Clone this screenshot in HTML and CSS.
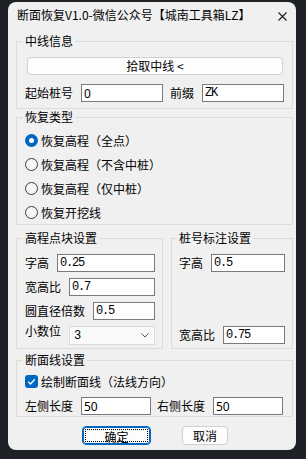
FILE: index.html
```html
<!DOCTYPE html>
<html lang="zh-CN">
<head>
<meta charset="UTF-8">
<meta name="viewport" content="width=device-width, initial-scale=1.0">
<title>断面恢复</title>
<link rel="stylesheet" href="styles.css">
</head>
<body>

<div class="window">
    <div class="titlebar">
        <span class="title">断面恢复V1.0-微信公众号【城南工具箱LZ】</span>
        <svg class="close" width="9" height="9" viewBox="0 0 9 9">
            <path d="M0.5 0.5 L8.5 8.5 M8.5 0.5 L0.5 8.5" stroke="#1a1a1a" stroke-width="1.1" fill="none"/>
        </svg>
    </div>

    <div class="content">
        <fieldset class="group group-line">
            <legend>中线信息</legend>
            <button class="btn pick">拾取中线 &lt;</button>
            <div class="row">
                <span class="label w56">起始桩号</span>
                <input class="field sans w82" type="text" value="0">
                <span class="label prefix">前缀</span>
                <input class="field mono w82" type="text" value="ZK">
            </div>
        </fieldset>

        <fieldset class="group group-type">
            <legend>恢复类型</legend>
            <div class="option"><span class="radio checked"></span>恢复高程（全点）</div>
            <div class="option"><span class="radio"></span>恢复高程（不含中桩）</div>
            <div class="option"><span class="radio"></span>恢复高程（仅中桩）</div>
            <div class="option"><span class="radio"></span>恢复开挖线</div>
        </fieldset>

        <div class="split">
            <fieldset class="group group-block">
                <legend>高程点块设置</legend>
                <div class="line">
                    <span class="label">字高</span>
                    <input class="field mono grow" type="text" value="0.25">
                </div>
                <div class="line">
                    <span class="label">宽高比</span>
                    <input class="field mono grow" type="text" value="0.7">
                </div>
                <div class="line">
                    <span class="label">圆直径倍数</span>
                    <input class="field mono grow" type="text" value="0.5">
                </div>
                <div class="line">
                    <span class="label raised">小数位</span>
                    <div class="select grow">
                        <span class="mono">3</span>
                        <svg width="8" height="5" viewBox="0 0 8 5">
                            <path d="M0.5 0.5 L4 4 L7.5 0.5" stroke="#5a5a5a" stroke-width="1" fill="none"/>
                        </svg>
                    </div>
                </div>
            </fieldset>

            <fieldset class="group group-stake">
                <legend>桩号标注设置</legend>
                <div class="line">
                    <span class="label">字高</span>
                    <input class="field mono grow" type="text" value="0.5">
                </div>
                <div class="line last">
                    <span class="label">宽高比</span>
                    <input class="field mono grow" type="text" value="0.75">
                </div>
            </fieldset>
        </div>

        <fieldset class="group group-section">
            <legend>断面线设置</legend>
            <div class="check-row">
                <span class="checkbox">
                    <svg width="13" height="13" viewBox="0 0 13 13">
                        <path d="M3.2 6.8 L5.5 9 L9.8 4.2" stroke="#fff" stroke-width="1.3" fill="none"/>
                    </svg>
                </span>
                绘制断面线（法线方向）
            </div>
            <div class="row lengths">
                <span class="label w56">左侧长度</span>
                <input class="field sans w70" type="text" value="50">
                <span class="label right-len">右侧长度</span>
                <input class="field sans w70" type="text" value="50">
            </div>
        </fieldset>

        <div class="actions">
            <button class="btn ok"><span class="focus">确定</span></button>
            <button class="btn cancel">取消</button>
        </div>
    </div>
</div>

</body>
</html>
```

FILE: styles.css
```css
body {
    margin: 0;
    background-color: #1e2227;
    font-family: "Noto Sans CJK SC", "Noto Sans", sans-serif;
    font-size: 12px;
    color: #000;
}

.window {
    margin: 2px 0 0 8px;
    width: 288px;
    height: 448px;
    background-color: #f0f0f0;
    border-radius: 8px;
}

.titlebar {
    height: 31px;
    box-sizing: border-box;
    display: flex;
    justify-content: space-between;
    align-items: flex-start;
    padding: 5px 9px 0 9px;
    line-height: 16px;
}

.close {
    margin-top: 5px;
}

.content {
    padding: 0 3px 0 8px;
}

.group {
    margin: 0;
    min-width: 0;
    border: 1px solid #dcdcdc;
    padding: 8px 7px 6px 8px;
}

.group legend {
    font-size: 12px;
    line-height: 16px;
    padding: 0 2px;
    margin-left: -2px;
}

/* inputs */
.field {
    box-sizing: border-box;
    height: 18px;
    border: 1px solid #7a7a7a;
    background-color: #fff;
    padding: 0 2px;
    margin: 0;
    outline: none;
    color: #000;
}

.mono {
    font-family: "Liberation Mono", monospace;
    font-size: 12px;
    letter-spacing: -1.2px;
}

.sans {
    font-family: "Noto Sans", sans-serif;
    font-size: 12px;
}

.w82 { width: 82px; }
.w70 { width: 70px; }
.w56 { width: 56px; }
.grow { flex: 1; min-width: 0; }

.label {
    flex-shrink: 0;
    line-height: 18px;
}

.row {
    display: flex;
    align-items: center;
    height: 18px;
}

/* buttons */
.btn {
    box-sizing: border-box;
    font-family: "Noto Sans CJK SC", sans-serif;
    font-size: 12px;
    color: #000;
    background-color: #fdfdfd;
    border: 1px solid #d0d0d0;
    border-radius: 4px;
    padding: 0;
    margin: 0;
}

.pick {
    display: block;
    width: 256px;
    height: 18px;
    margin-left: 2px;
    line-height: 16px;
}

.group-line .row {
    margin-top: 9px;
}

.prefix {
    width: 32px;
    margin-left: 7px;
}

/* radio options */
.group-type {
    padding: 3px 7px 0 8px;
}

.option {
    display: flex;
    align-items: center;
    height: 24px;
    gap: 3px;
}

.radio {
    box-sizing: border-box;
    width: 13px;
    height: 13px;
    border-radius: 50%;
    border: 1px solid #3c3c3c;
    background-color: #f6f6f6;
}

.radio.checked {
    border: 4px solid #0067c0;
    background-color: #fff;
}

/* block settings */
.split {
    display: flex;
    gap: 8px;
    margin-top: 5px;
}

.group-block {
    width: 147px;
    box-sizing: border-box;
    padding: 8px 7px 4px 8px;
}

.group-stake {
    flex: 1;
    padding: 8px 7px 4px 7px;
}

.line {
    display: flex;
    align-items: center;
    gap: 8px;
    height: 18px;
    margin-bottom: 6px;
}

.line:last-child {
    margin-bottom: 0;
}

.group-stake .last {
    margin-top: 54px;
}

.raised {
    align-self: flex-start;
    margin-top: -4px;
}

.select {
    box-sizing: border-box;
    height: 19px;
    margin-top: 1px;
    border: 1px solid #dadada;
    background-color: #f9f9f9;
    display: flex;
    align-items: center;
    justify-content: space-between;
    padding: 0 5px 0 4px;
}

/* section line */
.group-section {
    margin-top: 3px;
    padding: 4px 7px 1px 8px;
}

.check-row {
    display: flex;
    align-items: center;
    gap: 3px;
    height: 18px;
}

.checkbox {
    display: block;
    width: 13px;
    height: 13px;
    border-radius: 3px;
    background-color: #0067c0;
}

.checkbox svg {
    display: block;
}

.lengths {
    margin-top: 7px;
}

.right-len {
    margin-left: 6px;
    width: 56px;
}

/* dialog buttons */
.actions {
    display: flex;
    margin-top: 9px;
    padding-left: 66px;
    gap: 31px;
}

.ok {
    width: 69px;
    height: 19px;
    border: 1px solid #0067c0;
    box-shadow: 0 0 0 1px #0067c0 inset;
    padding: 2px;
}

.ok .focus {
    display: block;
    height: 100%;
    box-sizing: border-box;
    border: 1px dotted #000;
    line-height: 13px;
}

.cancel {
    width: 46px;
    height: 19px;
    line-height: 17px;
}
```
